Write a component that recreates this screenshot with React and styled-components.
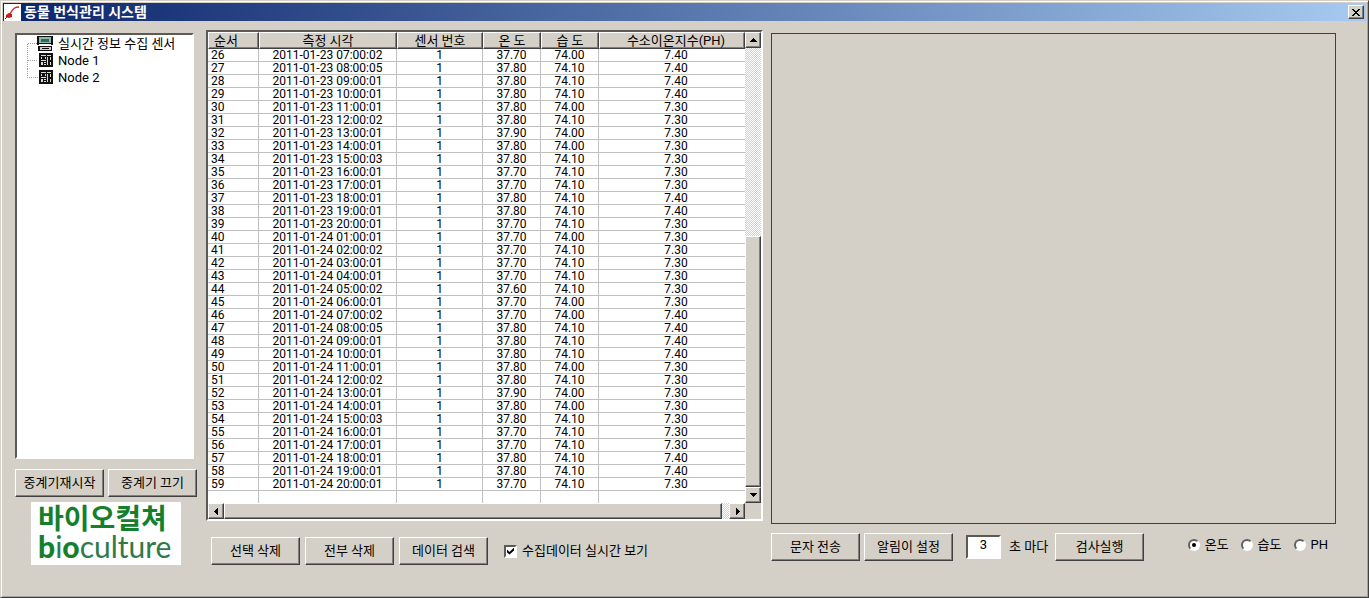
import { useState } from "react";
import styled, { createGlobalStyle, css } from "styled-components";

const GlobalStyle = createGlobalStyle`
	* {
		box-sizing: border-box;
	}

	body {
		margin: 0;
		background: #d4d0c8;
		color: #000;
		font-family: Roboto, "Noto Sans CJK KR", sans-serif;
		font-size: 13px;
		line-height: 16px;
	}

	button,
	input {
		font: inherit;
		color: inherit;
	}
`;

const raised = css`
	border: 1px solid;
	border-color: #fff #404040 #404040 #fff;
	box-shadow: inset -1px -1px 0 #808080;
	background: #d4d0c8;
`;

const sunken = css`
	border: 2px solid;
	border-color: #5c5a56 #fff #fff #5c5a56;
`;

const Window = styled.div`
	display: flex;
	flex-direction: column;
	min-height: 100vh;
	border: 1px solid;
	border-color: #d4d0c8 #404040 #404040 #d4d0c8;
	box-shadow: inset 1px 1px 0 #fff, inset -1px -1px 0 #a4a4a4;
	padding: 2px;
`;

const TitleBar = styled.header`
	display: flex;
	align-items: center;
	gap: 3px;
	height: 18px;
	padding: 0 2px 0 1px;
	background: linear-gradient(to right, #0a246a, #a6caf0);
	color: #fff;

	h1 {
		flex: 1;
		margin: 0;
		font-size: 14px;
		line-height: 18px;
		font-weight: 700;
	}
`;

const CloseButton = styled.button`
	${raised}
	display: flex;
	align-items: center;
	justify-content: center;
	width: 16px;
	height: 14px;
	padding: 0;
`;

const Main = styled.main`
	display: grid;
	grid-template-columns: 183px 557px minmax(0, 1fr);
	gap: 8px;
	padding: 9px 30px 28px 12px;
`;

const SideColumn = styled.div`
	display: flex;
	flex-direction: column;
	padding-top: 3px;
`;

const ChartColumn = styled.div`
	display: flex;
	flex-direction: column;
	padding: 3px 0 4px;
`;

const Tree = styled.ul`
	${sunken}
	flex: 1;
	margin: 0 4px 10px 0;
	padding: 0 0 0 8px;
	background: #fff;
	list-style: none;
`;

const TreeItem = styled.li`
	display: flex;
	align-items: center;
	gap: 5px;
	height: 17px;
	line-height: 15px;
	white-space: nowrap;
`;

const Button = styled.button`
	${raised}
	width: 89px;
	height: 28px;
	padding: 0;
	white-space: nowrap;
`;

const ButtonRow = styled.div`
	display: flex;
	gap: 4px;
	margin-bottom: 5px;
`;

const Logo = styled.svg`
	display: block;
	width: 150px;
	height: 63px;
	margin-left: 16px;
	background: #fff;
	font-family: Lato, "Noto Sans CJK KR", sans-serif;
`;

const GridFrame = styled.div`
	${sunken}
	display: grid;
	grid-template-columns: minmax(0, 1fr) 16px;
	background: #d4d0c8;
`;

const Table = styled.table`
	width: 100%;
	table-layout: fixed;
	border-collapse: separate;
	border-spacing: 0;
	background: #fff;
	font-size: 12px;
	line-height: 12px;

	th {
		${raised}
		height: 17px;
		padding: 0;
		font-size: 13px;
		line-height: 14px;
		font-weight: 400;
		white-space: nowrap;
	}

	td {
		height: 13px;
		padding: 0;
		border-right: 1px solid #c0c0c0;
		border-bottom: 1px solid #c0c0c0;
		text-align: center;
		white-space: nowrap;
	}

	td:first-child {
		padding-left: 3px;
		text-align: left;
	}

	th:first-child {
		padding-left: 5px;
		text-align: left;
	}

	th:last-child,
	td:last-child {
		padding-left: 8px;
	}

	td:last-child {
		border-right: 0;
	}

	tr:last-child td {
		height: 12px;
		border-bottom: 0;
	}
`;

const ScrollBar = styled.div`
	display: flex;
	flex-direction: ${(props) => (props.$vertical ? "column" : "row")};
	background: repeating-conic-gradient(#fff 0% 25%, #d4d0c8 0% 50%) 0 0 / 2px 2px;
`;

const ScrollButton = styled.button`
	${raised}
	display: flex;
	align-items: center;
	justify-content: center;
	width: 16px;
	height: 16px;
	padding: 0;
`;

const ScrollTrack = styled.div`
	flex: ${(props) => props.$size};
`;

const ScrollThumb = styled.div`
	${raised}
	flex: ${(props) => props.$size};
`;

const Toolbar = styled.div`
	display: flex;
	align-items: center;
	gap: 5px;
	margin: 16px 0 0 5px;
`;

const CheckLabel = styled.label`
	display: flex;
	align-items: center;
	gap: 5px;
	margin-left: 11px;
`;

const Checkbox = styled.input`
	${sunken}
	appearance: none;
	display: grid;
	place-items: center;
	width: 13px;
	height: 13px;
	margin: 0;
	background: #fff;

	&:checked::before {
		content: "";
		width: 7px;
		height: 7px;
		background: #000;
		clip-path: polygon(0 29%, 36% 64%, 100% 0, 100% 43%, 36% 100%, 0 71%);
	}
`;

const Chart = styled.section`
	flex: 1;
	border: 1px solid #404040;
`;

const ControlRow = styled.div`
	display: flex;
	align-items: center;
	justify-content: space-between;
	margin-top: 9px;
	padding-right: 8px;
`;

const ControlGroup = styled.div`
	display: flex;
	align-items: center;
	gap: 4px;
`;

const IntervalLabel = styled.label`
	display: flex;
	align-items: center;
	gap: 8px;
	margin: 0 3px 0 9px;
`;

const IntervalInput = styled.input`
	${sunken}
	width: 35px;
	height: 24px;
	padding: 0 0 6px;
	background: #fff;
	text-align: center;
`;

const RadioGroup = styled.div`
	display: flex;
	gap: 12px;
	padding-bottom: 4px;
`;

const RadioLabel = styled.label`
	display: flex;
	align-items: center;
	gap: 5px;
`;

const Radio = styled.input`
	appearance: none;
	display: grid;
	place-items: center;
	width: 12px;
	height: 12px;
	margin: 0;
	border: 2px solid;
	border-color: #606060 #fff #fff #606060;
	border-radius: 50%;
	background: #fff;

	&:checked::before {
		content: "";
		width: 4px;
		height: 4px;
		border-radius: 50%;
		background: #000;
	}
`;

const arrows = {
	up: "M4 2h1v1h1v1h1v1h1v1H1V5h1V4h1V3h1z",
	down: "M1 2h7v1H7v1H6v1H5v1H4V5H3V4H2V3H1z",
	left: "M6 1v7H5V7H4V6H3V5H2V4h1V3h1V2h1V1z",
	right: "M3 1v7h1V7h1V6h1V5h1V4H6V3H5V2H4V1z",
};

const Arrow = ({ direction }) => (
	<svg width="9" height="9" shapeRendering="crispEdges">
		<path d={arrows[direction]} />
	</svg>
);

const AppIcon = () => (
	<svg width="17" height="17" viewBox="0 0 17 17">
		<rect width="17" height="17" fill="#fff" />
		<path d="M5 11C8 8 8 3 15 3" fill="none" stroke="#d22" strokeWidth="1.4" />
		<path d="M2 11l3-2 3 1v3l-3 1-3-1z" fill="#d01818" />
		<path d="M1 15l3-3" stroke="#333" strokeWidth="1" />
	</svg>
);

const branches = {
	root: "M2.5 8.5H13M2.5 8.5V17",
	middle: "M2.5 0V17M2.5 8.5H13",
	last: "M2.5 0V8.5H13",
};

const TreeIcon = ({ branch }) => (
	<svg width="28" height="17" shapeRendering="crispEdges">
		<path
			d={branches[branch]}
			fill="none"
			stroke="#a0a0a0"
			strokeDasharray="1 1"
		/>
		{branch === "root" ? (
			<>
				<path d="M12 1h16v9H12zM13 11h14v5H13z" fill="#111" />
				<path d="M14 2h12v6H14z" fill="#8fb8a8" />
				<path d="M16 4h8v3h-8z" fill="#287058" />
				<path d="M14 9h12v1H14z" fill="#fff" />
				<path d="M15 12h11v3H15z" fill="#c8d4cc" />
				<path d="M17 13h7v1h-7z" fill="#111" />
			</>
		) : (
			<>
				<path d="M14 1h14v14H14z" fill="#111" />
				<path
					d="M16 3h5v1h-5zM16 5h1v2h-1zM20 5h1v2h-1zM16 8h5v1h-5zM16 10h2v3h-2zM19 10h2v1h-2zM19 12h2v1h-2zM22 3h4v1h-4zM22 5h1v8h-1zM25 5h1v3h-1zM25 10h1v3h-1z"
					fill="#dcdcd4"
				/>
			</>
		)}
	</svg>
);

const nodes = [
	{ name: "실시간 정보 수집 센서", branch: "root" },
	{ name: "Node 1", branch: "middle" },
	{ name: "Node 2", branch: "last" },
];

const columns = [
	{ title: "순서", width: 51 },
	{ title: "측정 시각", width: 138 },
	{ title: "센서 번호", width: 86 },
	{ title: "온 도", width: 58 },
	{ title: "습 도", width: 58 },
	{ title: "수소이온지수(PH)" },
];

const dayReadings = [
	["07:00:02", "37.70", "74.00", "7.40"],
	["08:00:05", "37.80", "74.10", "7.40"],
	["09:00:01", "37.80", "74.10", "7.40"],
	["10:00:01", "37.80", "74.10", "7.40"],
	["11:00:01", "37.80", "74.00", "7.30"],
	["12:00:02", "37.80", "74.10", "7.30"],
	["13:00:01", "37.90", "74.00", "7.30"],
	["14:00:01", "37.80", "74.00", "7.30"],
	["15:00:03", "37.80", "74.10", "7.30"],
	["16:00:01", "37.70", "74.10", "7.30"],
	["17:00:01", "37.70", "74.10", "7.30"],
	["18:00:01", "37.80", "74.10", "7.40"],
	["19:00:01", "37.80", "74.10", "7.40"],
	["20:00:01", "37.70", "74.10", "7.30"],
];

const nightReadings = [
	["01:00:01", "37.70", "74.00", "7.30"],
	["02:00:02", "37.70", "74.10", "7.30"],
	["03:00:01", "37.70", "74.10", "7.30"],
	["04:00:01", "37.70", "74.10", "7.30"],
	["05:00:02", "37.60", "74.10", "7.30"],
	["06:00:01", "37.70", "74.00", "7.30"],
];

const onDate = (date, readings) =>
	readings.map(([time, temp, humidity, ph]) => ({
		time: `${date} ${time}`,
		temp,
		humidity,
		ph,
	}));

const FIRST_ROW = 26;

const rows = [
	...onDate("2011-01-23", dayReadings),
	...onDate("2011-01-24", nightReadings),
	...onDate("2011-01-24", dayReadings),
];

const App = () => {
	const [realtime, setRealtime] = useState(true);
	const [interval, setIntervalValue] = useState("3");
	const [series, setSeries] = useState("온도");

	return (
		<Window>
			<GlobalStyle />
			<TitleBar>
				<AppIcon />
				<h1>동물 번식관리 시스템</h1>
				<CloseButton aria-label="닫기">
					<svg width="8" height="7" shapeRendering="crispEdges">
						<path d="M0 0h2v1h1v1h2V1h1V0h2v1H7v1H6v1H5v1h1v1h1v1h1v1H6V6H5V5H3v1H2v1H0V6h1V5h1V4h1V3H2V2H1V1H0z" />
					</svg>
				</CloseButton>
			</TitleBar>

			<Main>
				<SideColumn>
					<Tree>
						{nodes.map((node) => (
							<TreeItem key={node.name}>
								<TreeIcon branch={node.branch} />
								{node.name}
							</TreeItem>
						))}
					</Tree>
					<ButtonRow>
						<Button>중계기재시작</Button>
						<Button>중계기 끄기</Button>
					</ButtonRow>
					<Logo viewBox="0 0 150 63" role="img">
						<text x="7" y="27" fontSize="28" fontWeight="700" fill="#14802c">
							바이오컬쳐
						</text>
						<text x="7" y="56" fontSize="30" fill="#2f7a48">
							<tspan fontWeight="900" fill="#14802c">
								b
							</tspan>
							i
							<tspan fontWeight="900" fill="#14802c">
								o
							</tspan>
							culture
						</text>
					</Logo>
				</SideColumn>

				<div>
					<GridFrame>
						<Table>
							<colgroup>
								{columns.map((column) => (
									<col key={column.title} width={column.width} />
								))}
							</colgroup>
							<thead>
								<tr>
									{columns.map((column) => (
										<th key={column.title}>{column.title}</th>
									))}
								</tr>
							</thead>
							<tbody>
								{rows.map((row, index) => (
									<tr key={row.time}>
										<td>{FIRST_ROW + index}</td>
										<td>{row.time}</td>
										<td>1</td>
										<td>{row.temp}</td>
										<td>{row.humidity}</td>
										<td>{row.ph}</td>
									</tr>
								))}
								<tr>
									{columns.map((column) => (
										<td key={column.title} />
									))}
								</tr>
							</tbody>
						</Table>
						<ScrollBar $vertical>
							<ScrollButton aria-label="위로">
								<Arrow direction="up" />
							</ScrollButton>
							<ScrollTrack $size={189} />
							<ScrollThumb $size={250} />
							<ScrollButton aria-label="아래로">
								<Arrow direction="down" />
							</ScrollButton>
						</ScrollBar>
						<ScrollBar>
							<ScrollButton aria-label="왼쪽">
								<Arrow direction="left" />
							</ScrollButton>
							<ScrollThumb $size={499} />
							<ScrollTrack $size={7} />
							<ScrollButton aria-label="오른쪽">
								<Arrow direction="right" />
							</ScrollButton>
						</ScrollBar>
					</GridFrame>
					<Toolbar>
						<Button>선택 삭제</Button>
						<Button>전부 삭제</Button>
						<Button>데이터 검색</Button>
						<CheckLabel>
							<Checkbox
								type="checkbox"
								checked={realtime}
								onChange={(e) => setRealtime(e.target.checked)}
							/>
							수집데이터 실시간 보기
						</CheckLabel>
					</Toolbar>
				</div>

				<ChartColumn>
					<Chart />
					<ControlRow>
						<ControlGroup>
							<Button>문자 전송</Button>
							<Button>알림이 설정</Button>
							<IntervalLabel>
								<IntervalInput
									type="text"
									value={interval}
									onChange={(e) => setIntervalValue(e.target.value)}
								/>
								초 마다
							</IntervalLabel>
							<Button>검사실행</Button>
						</ControlGroup>
						<RadioGroup>
							{["온도", "습도", "PH"].map((name) => (
								<RadioLabel key={name}>
									<Radio
										type="radio"
										name="series"
										checked={series === name}
										onChange={() => setSeries(name)}
									/>
									{name}
								</RadioLabel>
							))}
						</RadioGroup>
					</ControlRow>
				</ChartColumn>
			</Main>
		</Window>
	);
};

export default App;
